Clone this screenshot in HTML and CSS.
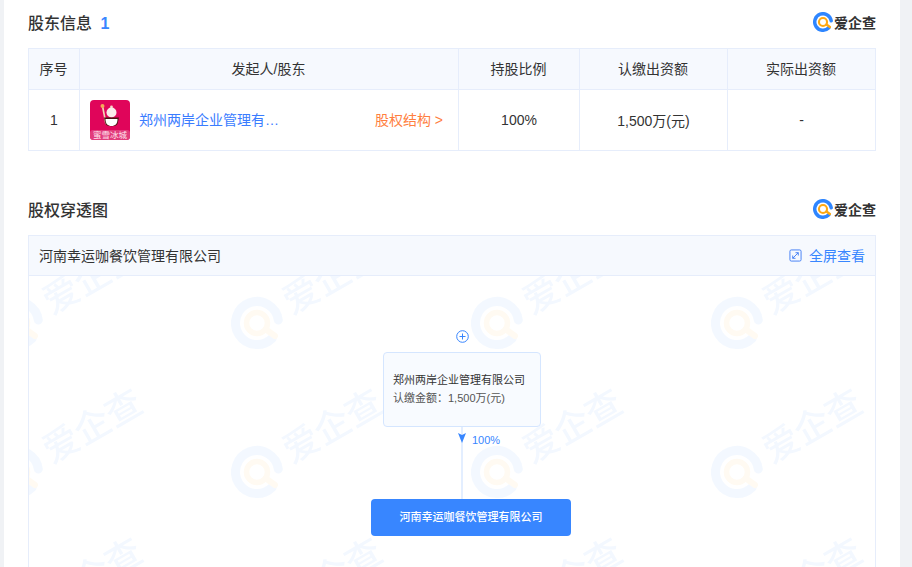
FILE: index.html
```html
<!DOCTYPE html>
<html lang="zh-CN">
<head>
    <meta charset="UTF-8">
    <meta name="viewport" content="width=device-width, initial-scale=1.0">
    <title>股东信息</title>
    <link rel="stylesheet" href="styles.css">
</head>
<body>
    <!-- shared logo mark, also used by the watermark -->
    <svg class="defs" width="0" height="0">
        <defs>
            <symbol id="mark" viewBox="-26 -26 52 52" overflow="visible">
                <path d="M21.3 -3A21.5 21.5 0 1 0 15.2 15.2" fill="none" stroke="#2f86ff" stroke-width="9" stroke-linecap="round"/>
                <circle r="10.5" fill="none" stroke="#ffa812" stroke-width="5.5"/>
                <path d="M9 6.5L18 13" fill="none" stroke="#ffa812" stroke-width="6" stroke-linecap="round"/>
            </symbol>
            <pattern id="wm" width="240" height="149" patternUnits="userSpaceOnUse" patternTransform="translate(168 -53)">
                <use class="wm-mark" href="#mark" x="34" y="74" width="52" height="52"/>
                <text class="wm-text" transform="translate(95 92) rotate(-30)">爱企查</text>
            </pattern>
        </defs>
    </svg>

    <main class="page">
        <section class="block block-holders">
            <header class="block-head">
                <h2>股东信息 <span class="count">1</span></h2>
                <div class="brand">
                    <svg width="20" height="20"><use href="#mark" width="20" height="20"/></svg>
                    <span>爱企查</span>
                </div>
            </header>
            <table class="holders">
                <colgroup>
                    <col class="c-no"><col class="c-name"><col class="c-ratio"><col class="c-sub"><col class="c-real">
                </colgroup>
                <thead>
                    <tr>
                        <th>序号</th>
                        <th>发起人/股东</th>
                        <th>持股比例</th>
                        <th>认缴出资额</th>
                        <th>实际出资额</th>
                    </tr>
                </thead>
                <tbody>
                    <tr>
                        <td>1</td>
                        <td class="holder">
                            <div class="holder-row">
                                <svg class="avatar" width="40" height="40" viewBox="0 0 40 40">
                                    <rect width="40" height="40" rx="4" fill="#e0055a"/>
                                    <rect y="30" width="40" height="10" rx="3" fill="#e23c7c"/>
                                    <path d="M12.7 7L16 24" stroke="#f3d7b5" stroke-width="1.6"/>
                                    <circle cx="12.5" cy="6" r="2" fill="#f4a95a"/>
                                    <circle cx="21.5" cy="7" r="1.4" fill="#f7d9c8"/>
                                    <circle cx="21.5" cy="12.5" r="5" fill="#f9ecea"/>
                                    <path d="M14 17.5H29L27.5 24C26 27 17 27 15.500 24Z" fill="#4a1610"/>
                                    <path d="M15.500 19H27.500C27.500 24 25 26 21.500 26S15.500 24 15.500 19Z" fill="#fff"/>
                                    <text class="avatar-text" x="20" y="38" text-anchor="middle">蜜雪冰城</text>
                                </svg>
                                <a class="holder-name">郑州两岸企业管理有…</a>
                                <a class="holder-link">股权结构 &gt;</a>
                            </div>
                        </td>
                        <td>100%</td>
                        <td>1,500万(元)</td>
                        <td>-</td>
                    </tr>
                </tbody>
            </table>
        </section>

        <section class="block block-chart">
            <header class="block-head">
                <h2>股权穿透图</h2>
                <div class="brand">
                    <svg width="20" height="20"><use href="#mark" width="20" height="20"/></svg>
                    <span>爱企查</span>
                </div>
            </header>
            <div class="panel">
                <div class="panel-head">
                    <span>河南幸运咖餐饮管理有限公司</span>
                    <a class="fullscreen">
                        <svg width="13" height="13" viewBox="0 0 14 14" fill="none" stroke="#3f7cf5">
                            <rect x="1" y="1" width="12" height="12" rx="1.5"/>
                            <path d="M4 10L10 4M7 4H10V7M4 7V10H7"/>
                        </svg>
                        全屏查看
                    </a>
                </div>
                <div class="chart">
                    <svg class="watermark" width="100%" height="100%">
                        <rect width="100%" height="100%" fill="url(#wm)"/>
                    </svg>
                    <div class="tree">
                        <div class="tree-top">
                            <svg class="expand" width="13" height="13" viewBox="0 0 13 13" fill="#fff" stroke="#3886ff">
                                <circle cx="6.5" cy="6.5" r="5.8"/>
                                <path d="M3.5 6.5H9.5M6.5 3.5V9.5"/>
                            </svg>
                            <div class="node-holder">
                                <p class="node-name">郑州两岸企业管理有限公司</p>
                                <p class="node-amount">认缴金额：1,500万(元)</p>
                            </div>
                            <div class="edge">
                                <svg class="edge-arrow" width="8" height="10" viewBox="0 0 8 10">
                                    <path d="M0 0L4 2L8 0L4 10Z" fill="#3886ff"/>
                                </svg>
                                <span class="edge-label">100%</span>
                            </div>
                        </div>
                        <div class="node-company">河南幸运咖餐饮管理有限公司</div>
                    </div>
                </div>
            </div>
        </section>
    </main>
</body>
</html>
```

FILE: styles.css
```css
html, body {
    margin: 0;
    padding: 0;
    height: 100%;
    overflow: hidden;
}

body {
    background: #f0f2f5;
    font-family: "Liberation Sans", "Noto Sans CJK SC", sans-serif;
    font-size: 14px;
    color: #333;
}

a {
    cursor: pointer;
}

.defs {
    display: block;
    height: 0;
}

.page {
    margin: 0 12px 0 4px;
    padding: 0 24px;
    height: 100%;
    background: #fff;
    overflow: hidden;
}

.block-holders {
    padding-top: 10px;
}

.block-chart {
    padding-top: 46px;
}

.block-head {
    display: flex;
    justify-content: space-between;
    align-items: center;
    height: 24px;
    margin-bottom: 14px;
}

.block-head h2 {
    margin: 0;
    font-size: 16px;
    font-weight: 500;
    color: #333;
}

.count {
    margin-left: 4px;
    color: #3886ff;
    font-weight: 700;
}

.brand {
    display: flex;
    align-items: center;
    gap: 1px;
    font-size: 14px;
    font-weight: 700;
    color: #333;
}

.brand svg {
    margin-left: 1px;
}

.holders {
    width: 847px;
    border-collapse: collapse;
    table-layout: fixed;
}

.c-no { width: 51px; }
.c-name { width: 379px; }
.c-ratio { width: 121px; }
.c-sub { width: 148px; }
.c-real { width: 148px; }

.holders th,
.holders td {
    border: 1px solid #e6edfb;
    text-align: center;
    font-weight: 400;
    padding: 0;
}

.holders th {
    box-sizing: border-box;
    height: 41px;
    padding: 0 1px 2px 0;
    background: #f6f9fe;
}

.holders td {
    height: 60px;
}

.holder-row {
    display: flex;
    align-items: center;
    padding: 0 15px 0 10px;
}

.avatar {
    flex: none;
    margin-right: 9px;
}

.avatar-text {
    font-size: 8.5px;
    fill: #ffe3ee;
}

.holder-name {
    padding-bottom: 2px;
    color: #3a7cff;
}

.holder-link {
    margin-left: auto;
    padding-bottom: 2px;
    color: #ff7f3f;
}

.panel {
    border: 1px solid #e6edfb;
    height: 400px;
}

.panel-head {
    box-sizing: border-box;
    display: flex;
    justify-content: space-between;
    align-items: center;
    height: 40px;
    padding: 0 10px 2px;
    background: #f6f9fe;
    border-bottom: 1px solid #e6edfb;
}

.fullscreen {
    display: flex;
    align-items: center;
    gap: 7px;
    color: #3886ff;
}

.fullscreen svg {
    margin-top: 2px;
}

.chart {
    position: relative;
    height: 360px;
}

.watermark {
    position: absolute;
    top: 0;
    left: 0;
}

.wm-mark {
    opacity: .06;
}

.wm-text {
    font-size: 36px;
    font-weight: 500;
    fill: #f3f8ff;
}

.tree {
    position: relative;
    width: 200px;
    margin-left: 342px;
    padding-top: 54px;
}

.tree-top {
    display: flex;
    flex-direction: column;
    align-items: center;
    width: 158px;
    margin-left: 12px;
}

.expand {
    display: block;
    margin-bottom: 9px;
}

.node-holder {
    box-sizing: border-box;
    display: flex;
    flex-direction: column;
    justify-content: center;
    gap: 3px;
    width: 158px;
    height: 75px;
    padding-left: 9px;
    background: #f8fbff;
    border: 1px solid #d5e6ff;
    border-radius: 4px;
    font-size: 11px;
}

.node-holder p {
    margin: 0;
    line-height: 15px;
}

.node-amount {
    color: #555;
}

.edge {
    position: relative;
    width: 2px;
    height: 72px;
    background: #e3eeff;
}

.edge-arrow {
    position: absolute;
    top: 6px;
    left: -3px;
}

.edge-label {
    position: absolute;
    top: 7px;
    left: 11px;
    font-size: 11px;
    color: #3886ff;
}

.node-company {
    height: 37px;
    line-height: 36px;
    text-align: center;
    background: #3886ff;
    border-radius: 4px;
    color: #fff;
    font-size: 11px;
    font-weight: 500;
}
```
